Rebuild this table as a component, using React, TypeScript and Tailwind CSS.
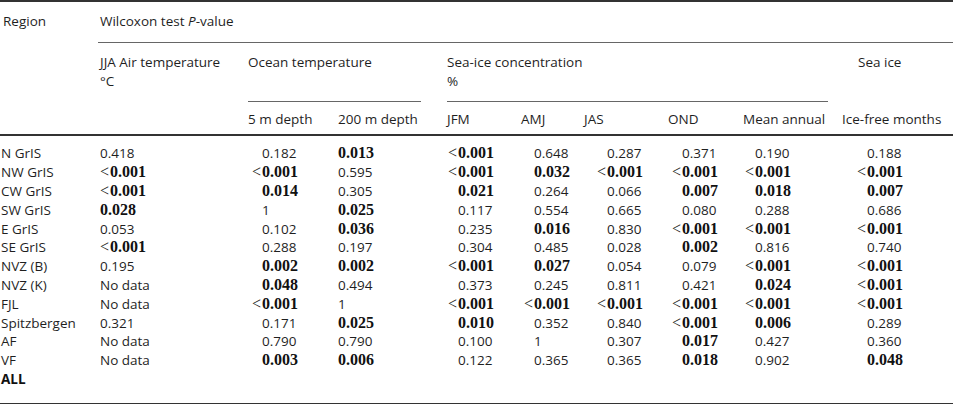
const rows: [string, string[]][] = [
  ['N GrIS', ['0.418', '0.182', '*0.013', '<0.001', '0.648', '0.287', '0.371', '0.190', '0.188']],
  ['NW GrIS', ['<0.001', '<0.001', '0.595', '<0.001', '*0.032', '<0.001', '<0.001', '<0.001', '<0.001']],
  ['CW GrIS', ['<0.001', '*0.014', '0.305', '*0.021', '0.264', '0.066', '*0.007', '*0.018', '*0.007']],
  ['SW GrIS', ['*0.028', '1', '*0.025', '0.117', '0.554', '0.665', '0.080', '0.288', '0.686']],
  ['E GrIS', ['0.053', '0.102', '*0.036', '0.235', '*0.016', '0.830', '<0.001', '<0.001', '<0.001']],
  ['SE GrIS', ['<0.001', '0.288', '0.197', '0.304', '0.485', '0.028', '*0.002', '0.816', '0.740']],
  ['NVZ (B)', ['0.195', '*0.002', '*0.002', '<0.001', '*0.027', '0.054', '0.079', '<0.001', '<0.001']],
  ['NVZ (K)', ['No data', '*0.048', '0.494', '0.373', '0.245', '0.811', '0.421', '*0.024', '<0.001']],
  ['FJL', ['No data', '<0.001', '1', '<0.001', '<0.001', '<0.001', '<0.001', '<0.001', '<0.001']],
  ['Spitzbergen', ['0.321', '0.171', '*0.025', '*0.010', '0.352', '0.840', '<0.001', '*0.006', '0.289']],
  ['AF', ['No data', '0.790', '0.790', '0.100', '1', '0.307', '*0.017', '0.427', '0.360']],
  ['VF', ['No data', '*0.003', '*0.006', '0.122', '0.365', '0.365', '*0.018', '0.902', '*0.048']],
]

// offset of the leading "0" inside each value column
const pads = ['pl-0', 'pl-[14px]', 'pl-0', 'pl-[11px]', 'pl-[13px]', 'pl-[23px]', 'pl-[14px]', 'pl-[12px]', 'pl-[25px]']

const grid = 'grid grid-cols-[100px_148px_90px_109px_74px_63px_84px_75px_99px_111px]'

function Value({ v, col }: { v: string; col: number }) {
  const lt = v.startsWith('<')
  const bold = lt || v.startsWith('*')
  const num = v.replace(/^[<*]/, '')
  return (
    <div className={pads[col]}>
      {lt &&
        (col === 0 ? (
          <span className="inline-block w-[10px] text-[16px] font-['Liberation_Serif',serif]">&lt;</span>
        ) : (
          <span className="inline-block w-[12px] -ml-[12px] text-right pr-[1px] text-[16px] font-['Liberation_Serif',serif]">&lt;</span>
        ))}
      {bold ? (
        <span className="font-bold text-[16px] text-[#111] font-['Liberation_Serif',serif]">{num}</span>
      ) : (
        <span>{num}</span>
      )}
    </div>
  )
}

export default function App() {
  return (
    <div className="w-[953px] h-[404px] bg-white text-[#1f1f1f] text-[13.5px] leading-[18.8px] font-['Open_Sans',sans-serif] overflow-hidden">
      <div className="border-t-2 border-[#333]" />

      {/* header */}
      <div className={grid}>
        <div className="pl-[3px] pt-[10px] h-[41px]">Region</div>
        <div className="col-span-9 pt-[10px] border-b border-[#666] -ml-[2px] pl-[2px]">
          Wilcoxon test <i>P</i>-value
        </div>

        <div className="col-start-2 pt-[10px]">
          JJA Air temperature
          <br />
          °C
        </div>
        <div className="col-span-2 pt-[10px] mr-[26px] flex flex-col">
          <div>Ocean temperature</div>
          <div className="h-[18.8px]" />
          <div className="mt-[10px] border-b border-[#666]" />
        </div>
        <div className="col-span-5 pt-[10px] mr-[14px] flex flex-col">
          <div>Sea-ice concentration</div>
          <div>%</div>
          <div className="mt-[10px] border-b border-[#666]" />
        </div>
        <div className="pt-[10px] pl-[16px]">Sea ice</div>

        <div className="pt-[8px] pb-[6px]" />
        <div className="pt-[8px] pb-[6px]" />
        <div className="pt-[8px] pb-[6px]">5 m depth</div>
        <div className="pt-[8px] pb-[6px]">200 m depth</div>
        <div className="pt-[8px] pb-[6px]">JFM</div>
        <div className="pt-[8px] pb-[6px]">AMJ</div>
        <div className="pt-[8px] pb-[6px]">JAS</div>
        <div className="pt-[8px] pb-[6px]">OND</div>
        <div className="pt-[8px] pb-[6px]">Mean annual</div>
        <div className="pt-[8px] pb-[6px] whitespace-nowrap">Ice-free months</div>
      </div>

      <div className="border-t-2 border-[#333]" />

      {/* body */}
      <div className={`${grid} pt-[8px] pb-[14px]`}>
        {rows.map(([region, vals]) => (
          <div key={region} className="contents">
            <div className="pl-[1px] whitespace-nowrap">{region}</div>
            {vals.map((v, i) => (
              <Value key={i} v={v} col={i} />
            ))}
          </div>
        ))}
        <div className="pl-[1px] font-bold text-[#111]">ALL</div>
      </div>

      <div className="border-t-2 border-[#333]" />
    </div>
  )
}
